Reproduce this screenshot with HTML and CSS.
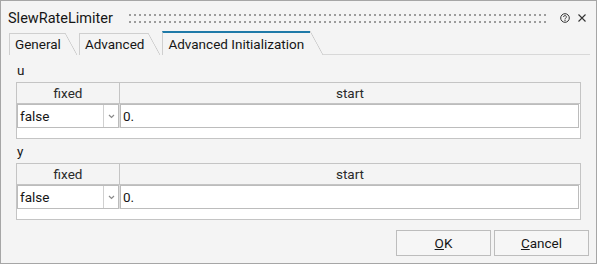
FILE: index.html
```html
<!DOCTYPE html>
<html lang="en">
<head>
    <meta charset="UTF-8">
    <title>SlewRateLimiter</title>
    <link rel="stylesheet" href="styles.css">
</head>
<body>
    <div class="dialog">
        <div class="titlebar">
            <span class="title">SlewRateLimiter</span>
            <span class="grip"></span>
            <svg class="help" viewBox="0 0 10 10">
                <circle cx="5" cy="5" r="4.3" fill="none" stroke="#333" stroke-width="1"/>
                <path d="M3.6 4a1.4 1.4 0 1 1 2 1.2c-.4.2-.6.5-.6.9v.3" fill="none" stroke="#333" stroke-width=".9"/>
                <circle cx="5" cy="7.4" r=".55" fill="#333"/>
            </svg>
            <svg class="close" viewBox="0 0 8 8">
                <path d="M.5.5l7 7M7.5.5l-7 7" stroke="#333" stroke-width="1.1"/>
            </svg>
        </div>

        <div class="tabs">
            <div class="tab">General</div>
            <div class="tab">Advanced</div>
            <div class="tab active">Advanced Initialization</div>
            <div class="tab-rest"></div>
        </div>

        <div class="panel">
            <div class="section">
                <div class="section-label">u</div>
                <div class="table">
                    <div class="table-head">
                        <div class="th">fixed</div>
                        <div class="th">start</div>
                    </div>
                    <div class="table-row">
                        <div class="combo">
                            <span class="combo-value">false</span>
                            <span class="combo-arrow">
                                <svg width="7" height="5" viewBox="0 0 7 5"><path d="M1 1l2.5 2.5L6 1" fill="none" stroke="#8a8a8a" stroke-width="1.2"/></svg>
                            </span>
                        </div>
                        <div class="field">0.</div>
                    </div>
                    <div class="table-spare"></div>
                </div>
            </div>

            <div class="section">
                <div class="section-label">y</div>
                <div class="table">
                    <div class="table-head">
                        <div class="th">fixed</div>
                        <div class="th">start</div>
                    </div>
                    <div class="table-row">
                        <div class="combo">
                            <span class="combo-value">false</span>
                            <span class="combo-arrow">
                                <svg width="7" height="5" viewBox="0 0 7 5"><path d="M1 1l2.5 2.5L6 1" fill="none" stroke="#8a8a8a" stroke-width="1.2"/></svg>
                            </span>
                        </div>
                        <div class="field">0.</div>
                    </div>
                    <div class="table-spare"></div>
                </div>
            </div>
        </div>

        <div class="buttons">
            <button class="btn"><u>O</u>K</button>
            <button class="btn"><u>C</u>ancel</button>
        </div>
    </div>
</body>
</html>
```

FILE: styles.css
```css
* {
    box-sizing: border-box;
}
body {
    margin: 0;
    font-family: Roboto, 'Liberation Sans', sans-serif;
    font-size: 13.5px;
    color: #161616;
    background: #fff;
}
.dialog {
    width: 597px;
    height: 264px;
    border: 1px solid #a6a6a6;
    background: #f4f4f4;
    display: flex;
    flex-direction: column;
    overflow: hidden;
}

/* title bar */
.titlebar {
    height: 30px;
    display: flex;
    align-items: center;
    padding: 4px 10px 0 7px;
    flex-shrink: 0;
}
.title {
    font-size: 14.5px;
}
.grip {
    flex: 1;
    height: 9px;
    margin: 0 12px 0 16px;
    background-image: radial-gradient(circle at 1px 1px, #9c9c9c 1px, transparent 1.3px);
    background-size: 5px 7px;
}
.help {
    width: 10px;
    height: 10px;
    margin-right: 8px;
}
.close {
    width: 8px;
    height: 8px;
}

/* tabs */
.tabs {
    display: flex;
    align-items: flex-end;
    height: 24px;
    padding-left: 8px;
    flex-shrink: 0;
}
.tab {
    position: relative;
    height: 22px;
    line-height: 20px;
    padding: 0 4px 0 5px;
    margin-right: 14px;
    border-top: 1px solid #cfcfcf;
    border-left: 1px solid #cfcfcf;
}
.tab::after {
    content: "";
    position: absolute;
    top: -1px;
    right: -12px;
    width: 12px;
    height: calc(100% + 1px);
    background: linear-gradient(to top right, transparent calc(50% - 0.7px), #c8c8c8 50%, transparent calc(50% + 0.7px));
}
.tab.active {
    height: 24px;
    line-height: 22px;
    padding-right: 6px;
    margin-right: 0;
    border-top: 2px solid #1f7aa8;
}
.tab.active::after {
    top: -2px;
    right: -13px;
    width: 13px;
    height: calc(100% + 2px);
}
.tab-rest {
    flex: 1;
    height: 1px;
    margin: 0 6px 0 13px;
    background: #d8d8d8;
}

/* panel */
.panel {
    flex: 1;
    display: flex;
    flex-direction: column;
    gap: 4px;
    padding: 7px 15px 0 15px;
}
.section-label {
    height: 16px;
    line-height: 16px;
    padding-left: 1px;
    margin-bottom: 4px;
}
.table {
    border: 1px solid #c4c4c4;
    background: #fff;
}
.table-head {
    display: grid;
    grid-template-columns: 103px 1fr;
    height: 21px;
    background: #f4f4f4;
    border-bottom: 1px solid #c4c4c4;
}
.th {
    text-align: center;
    line-height: 20px;
    color: #2a2a2a;
}
.th:first-child {
    border-right: 1px solid #c4c4c4;
}
.table-row {
    display: grid;
    grid-template-columns: 102px 1fr;
    column-gap: 1px;
    height: 24px;
    padding-right: 1px;
}
.combo {
    display: flex;
    border: 1px solid #bcbcbc;
    box-shadow: 1px 0 0 #dcdcdc;
    background: #fff;
}
.combo-value {
    flex: 1;
    padding-left: 2px;
    line-height: 22px;
}
.combo-arrow {
    width: 15px;
    border-left: 1px solid #d0d0d0;
    display: flex;
    align-items: center;
    justify-content: center;
}
.field {
    border: 1px solid #bcbcbc;
    padding-left: 2px;
    line-height: 22px;
    background: #fff;
}
.table-spare {
    height: 10px;
}

/* buttons */
.buttons {
    display: flex;
    justify-content: flex-end;
    gap: 3px;
    padding: 0 7px 7px 0;
    flex-shrink: 0;
}
.btn {
    width: 95px;
    height: 26px;
    padding: 0;
    border: 1px solid #bdbdbd;
    background: #f6f6f6;
    font: inherit;
    color: #161616;
}
```
